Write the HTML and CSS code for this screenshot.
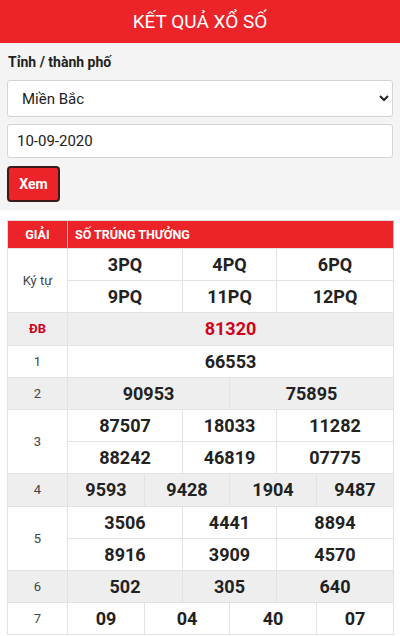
FILE: index.html
```html
<!DOCTYPE html>
<html>
<head>
	<meta charset="utf-8">
	<meta name="viewport" content="width=device-width, initial-scale=1">
	<title>Kết quả xổ số</title>
	<link rel="stylesheet" href="styles.css">
</head>
<body>
	<h1 class="top">KẾT QUẢ XỔ SỐ</h1>

	<form class="search">
		<label class="lbl" for="tinh">Tỉnh / thành phố</label>
		<select id="tinh" class="field pick">
			<option>Miền Bắc</option>
		</select>
		<input class="field date" type="text" value="10-09-2020">
		<button class="btn" type="button">Xem</button>
	</form>

	<div class="result">
		<table class="kq">
			<colgroup>
				<col class="c0">
				<col class="c1">
				<col class="c2">
				<col class="c3">
				<col class="c4">
				<col class="c5">
				<col class="c6">
			</colgroup>
			<tr class="head">
				<th>GIẢI</th>
				<th colspan="6" class="left">SỐ TRÚNG THƯỞNG</th>
			</tr>
			<tr>
				<td class="g" rowspan="2">Ký tự</td>
				<td colspan="2" class="n">3PQ</td>
				<td colspan="2" class="n">4PQ</td>
				<td colspan="2" class="n">6PQ</td>
			</tr>
			<tr>
				<td colspan="2" class="n">9PQ</td>
				<td colspan="2" class="n">11PQ</td>
				<td colspan="2" class="n">12PQ</td>
			</tr>
			<tr class="alt">
				<td class="g db">ĐB</td>
				<td colspan="6" class="n red">81320</td>
			</tr>
			<tr>
				<td class="g">1</td>
				<td colspan="6" class="n">66553</td>
			</tr>
			<tr class="alt">
				<td class="g">2</td>
				<td colspan="3" class="n">90953</td>
				<td colspan="3" class="n">75895</td>
			</tr>
			<tr>
				<td class="g" rowspan="2">3</td>
				<td colspan="2" class="n">87507</td>
				<td colspan="2" class="n">18033</td>
				<td colspan="2" class="n">11282</td>
			</tr>
			<tr>
				<td colspan="2" class="n">88242</td>
				<td colspan="2" class="n">46819</td>
				<td colspan="2" class="n">07775</td>
			</tr>
			<tr class="alt">
				<td class="g">4</td>
				<td class="n">9593</td>
				<td colspan="2" class="n">9428</td>
				<td colspan="2" class="n">1904</td>
				<td class="n">9487</td>
			</tr>
			<tr>
				<td class="g" rowspan="2">5</td>
				<td colspan="2" class="n">3506</td>
				<td colspan="2" class="n">4441</td>
				<td colspan="2" class="n">8894</td>
			</tr>
			<tr>
				<td colspan="2" class="n">8916</td>
				<td colspan="2" class="n">3909</td>
				<td colspan="2" class="n">4570</td>
			</tr>
			<tr class="alt">
				<td class="g">6</td>
				<td colspan="2" class="n">502</td>
				<td colspan="2" class="n">305</td>
				<td colspan="2" class="n">640</td>
			</tr>
			<tr>
				<td class="g">7</td>
				<td class="n">09</td>
				<td colspan="2" class="n">04</td>
				<td colspan="2" class="n">40</td>
				<td class="n">07</td>
			</tr>
		</table>
	</div>
</body>
</html>
```

FILE: styles.css
```css
* {
	box-sizing: border-box;
}

body {
	margin: 0;
	background: #f4f4f4;
	font-family: Roboto, "Liberation Sans", sans-serif;
	color: #222;
}

.top {
	margin: 0;
	height: 43px;
	line-height: 43px;
	background: #ec2328;
	color: #fff;
	font-size: 19px;
	font-weight: 400;
	text-align: center;
}

.search {
	display: flex;
	flex-direction: column;
	align-items: flex-start;
	padding: 10px 7px 8px 7px;
}

.lbl {
	font-size: 14px;
	font-weight: 700;
	line-height: 18px;
	margin: 0 0 9px 1px;
	color: #222;
}

.field {
	width: 100%;
	border: 1px solid #d4d4d4;
	border-radius: 3px;
	background: #fff;
	font-family: Roboto, "Liberation Sans", sans-serif;
	font-size: 15px;
	color: #222;
}

.pick {
	height: 37px;
	padding: 0 10px;
	margin-bottom: 7px;
}

.date {
	height: 34px;
	padding: 0 9px;
	margin-bottom: 8px;
}

.btn {
	width: 53px;
	height: 36px;
	background: #ec2328;
	border: 2px solid #3a1a1a;
	border-radius: 4px;
	color: #fff;
	font-family: Roboto, "Liberation Sans", sans-serif;
	font-size: 14px;
	font-weight: 700;
	padding: 0;
}

.result {
	background: #fff;
	padding: 10px 7px 2px 7px;
}

.kq {
	width: 386px;
	table-layout: fixed;
	border-collapse: collapse;
	border: 1px solid #ddd;
}

.c0 { width: 60px; }
.c1 { width: 77px; }
.c2 { width: 38px; }
.c3 { width: 47px; }
.c4 { width: 47px; }
.c5 { width: 40px; }
.c6 { width: 77px; }

.kq th {
	background: #ec2328;
	color: #fff;
	font-size: 12.5px;
	font-weight: 700;
	height: 28px;
	padding: 0;
	border-right: 1px solid #f6b0b2;
	text-align: center;
}

.kq th.left {
	text-align: left;
	padding-left: 7px;
}

.kq td {
	border: 1px solid #e2e2e2;
	height: 32.2px;
	padding: 0;
	text-align: center;
}

.kq .g {
	font-size: 13px;
	color: #444;
}

.kq .db {
	color: #d0021b;
	font-weight: 700;
}

.kq .n {
	font-size: 18px;
	font-weight: 700;
	color: #222;
}

.kq .red {
	color: #d0021b;
}

.kq .alt td {
	background: #eeeeee;
}
```
